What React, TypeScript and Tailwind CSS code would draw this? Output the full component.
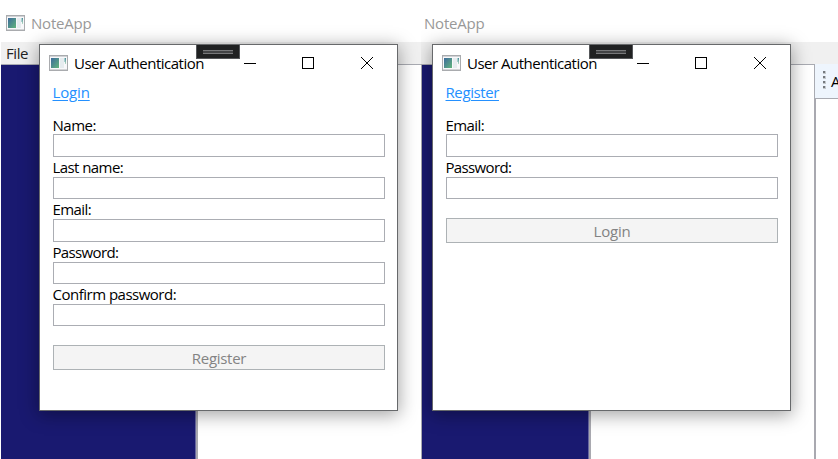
import React from 'react';

function AppIcon() {
  return (
    <svg width="19" height="16" viewBox="0 0 19 16" className="shrink-0" shapeRendering="crispEdges">
      <defs>
        <linearGradient id="pane" x1="0" y1="0" x2="1" y2="1">
          <stop offset="0" stopColor="#3c6a9c" />
          <stop offset="1" stopColor="#62b57c" />
        </linearGradient>
        <linearGradient id="strip" x1="0" y1="0" x2="0" y2="1">
          <stop offset="0" stopColor="#4a8a98" />
          <stop offset="1" stopColor="#b5dcc4" />
        </linearGradient>
      </defs>
      <rect width="19" height="16" fill="#a9abae" />
      <rect x="1" y="1" width="17" height="1" fill="#d0d2d5" />
      <rect x="1" y="2" width="17" height="12" fill="#f8f8fa" />
      <rect x="1" y="14" width="17" height="1" fill="#d3d4d6" />
      <rect x="2" y="3" width="8" height="10" fill="url(#pane)" />
      <rect x="11" y="3" width="4" height="10" fill="#e6ecef" />
      <rect x="16" y="3" width="1" height="6" fill="url(#strip)" />
      <rect x="15" y="3" width="1" height="4" fill="#a9cfd0" />
    </svg>
  );
}

function Label({ children, spacing }: { children: string; spacing: string }) {
  return <div className={`whitespace-nowrap leading-4 ${spacing}`}>{children}</div>;
}

type Field = { label: string; spacing: string; gap: string; height: string };

function Dialog({ link, linkSpacing, fields, action, actionSpacing }: {
  link: string;
  linkSpacing: string;
  fields: Field[];
  action: string;
  actionSpacing: string;
}) {
  return (
    <div className="relative flex h-[367px] w-[359px] flex-col border border-[#67696b] bg-white text-[15px] text-black shadow-[0_3px_17px_1px_rgba(0,0,0,0.36)]">
      <div className="flex h-[37px] items-center pl-[9px]">
        <div className="-mt-[2px]"><AppIcon /></div>
        <div className="ml-[6px] w-[170px] whitespace-nowrap tracking-[-0.5px]">User Authentication</div>
        <svg width="130" height="13" viewBox="0 0 130 13" shapeRendering="crispEdges" className="shrink-0" fill="none" stroke="#000">
          <path d="M0 6.5H12M58.5 .5h11v11h-11z" />
          <path d="M117 0l12 12M129 0l-12 12" shapeRendering="auto" />
        </svg>
      </div>
      <div className="absolute left-[156px] top-0 flex h-[14px] w-11 flex-col items-center justify-center border border-t-0 border-[#55575a] bg-[#202122]">
        <div className="h-1 w-[30px] border-y border-[#77787a] bg-[#424345]" />
      </div>
      <div className="pl-[13px] pr-[12px]">
        <a className={`-ml-[0.5px] block h-5 leading-5 text-[#2490ff] underline underline-offset-2 ${linkSpacing}`}>{link}</a>
        <div className="mt-[15px]">
          {fields.map((f) => (
            <div key={f.label} className={f.gap}>
              <div className="-ml-[0.5px]"><Label spacing={f.spacing}>{f.label}</Label></div>
              <div className={`border border-[#abadb3] bg-white ${f.height}`} />
            </div>
          ))}
        </div>
        <div className={`mt-[19px] h-[25px] border border-[#adb2b5] bg-[#f4f4f4] text-center leading-[25px] text-[#838383] ${actionSpacing}`}>{action}</div>
      </div>
    </div>
  );
}

const registerFields: Field[] = [
  { label: 'Name:', spacing: 'tracking-[-0.5px] h-[17px]', gap: '', height: 'h-[23px]' },
  { label: 'Last name:', spacing: 'tracking-[-0.57px] h-[18px]', gap: 'pt-[2px]', height: 'h-[22px]' },
  { label: 'Email:', spacing: 'tracking-[-0.6px] h-[18px]', gap: 'pt-[2px]', height: 'h-[23px]' },
  { label: 'Password:', spacing: 'tracking-[-0.65px] h-[18px]', gap: 'pt-[2px]', height: 'h-[22px]' },
  { label: 'Confirm password:', spacing: 'tracking-[-0.5px] h-[18px]', gap: 'pt-[2px]', height: 'h-[22px]' },
];

const loginFields: Field[] = [
  { label: 'Email:', spacing: 'tracking-[-0.6px] h-[17px]', gap: '', height: 'h-[23px]' },
  { label: 'Password:', spacing: 'tracking-[-0.65px] h-[18px]', gap: 'pt-[2px]', height: 'h-[22px]' },
];

export default function App() {
  return (
    <div className="flex h-[459px] w-[838px] overflow-hidden bg-white font-['Open_Sans','Noto_Sans',sans-serif] text-[15px]">
      <section className="relative flex w-[421px] shrink-0 flex-col overflow-hidden pl-px">
        <header className="flex h-[42px] items-center gap-[6px] pl-[5px] pt-[4px] text-[#999]">
          <div className="-mt-px"><AppIcon /></div>
          <span className="tracking-[-0.2px]">NoteApp</span>
        </header>
        <nav className="h-[23px] border-b border-[#a9abb2] bg-[#f0f0f0] pl-[5px] leading-[23px] tracking-[-0.4px] text-[#222]">File</nav>
        <main className="flex flex-1">
          <div className="flex w-[197px] border-r-2 border-[#a9a9b0]">
            <div className="flex-1 border-r border-[#6868a0] bg-[#191970]" />
          </div>
          <div className="flex-1 bg-white" />
        </main>
        <div className="absolute left-[39px] top-[44px]">
          <Dialog link="Login" linkSpacing="tracking-[-0.15px]" fields={registerFields} action="Register" actionSpacing="tracking-[-0.3px]" />
        </div>
      </section>
      <section className="relative flex w-[417px] shrink-0 flex-col overflow-hidden">
        <header className="flex h-[42px] items-center pl-[3px] pt-[4px] text-[#999]">
          <span className="tracking-[-0.2px]">NoteApp</span>
        </header>
        <nav className="h-[22px] bg-[#f0f0f0]" />
        <main className="flex flex-1">
          <div className="flex w-[170px] border-l border-r-2 border-t border-[#a9a9b0]">
            <div className="flex-1 border-r border-[#6868a0] bg-[#191970]" />
          </div>
          <div className="flex-1 border-t border-[#a9abb2] bg-white" />
          <div className="flex w-6 flex-col">
            <div className="flex h-[35px] items-center border-b border-l border-[#a9abb2] bg-[#eef5fd] pl-[8px]">
              <div className="-mt-[2px] flex w-[3px] flex-col gap-[2px]">
                {[0, 1, 2, 3].map((n) => (
                  <div key={n} className="size-[3px] border-b border-r border-[#c3c8cd] bg-[#75797e]" />
                ))}
              </div>
              <span className="ml-[5px] text-black">A</span>
            </div>
            <div className="flex-1 border-l-2 border-[#a9a9b0]" />
          </div>
        </main>
        <div className="absolute left-[11px] top-[44px]">
          <Dialog link="Register" linkSpacing="tracking-[-0.4px]" fields={loginFields} action="Login" actionSpacing="tracking-[-0.2px]" />
        </div>
      </section>
    </div>
  );
}
